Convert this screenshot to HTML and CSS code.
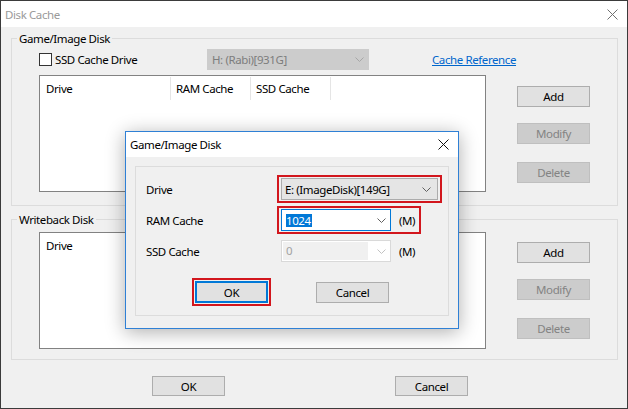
FILE: index.html
```html
<!DOCTYPE html>
<html>
<head>
<meta charset="utf-8">
<title>Disk Cache</title>
<link rel="stylesheet" href="styles.css">
</head>
<body>
<div class="win">
  <div class="titlebar">
    <span class="title">Disk Cache</span>
    <svg class="close" width="11" height="11" viewBox="0 0 11 11"><path d="M0.5 0.5L10.5 10.5M10.5 0.5L0.5 10.5"/></svg>
  </div>
  <div class="client">
    <div class="group g1">
      <span class="legend">Game/Image Disk</span>
      <div class="row1">
        <label class="chk"><span class="box"></span>SSD Cache Drive</label>
        <div class="combo wide"><span class="ctext">H: (Rabi)[931G]</span><svg class="chev" width="9" height="5" viewBox="0 0 9 5"><path d="M0.5 0.5L4.5 4.5L8.5 0.5"/></svg></div>
        <a class="link" href="#">Cache Reference</a>
      </div>
      <div class="row2">
        <div class="list">
          <div class="lhead">
            <span class="col c1">Drive</span><span class="col c2">RAM Cache</span><span class="col c3">SSD Cache</span>
          </div>
        </div>
        <div class="btns">
          <button class="btn">Add</button>
          <button class="btn dis m">Modify</button>
          <button class="btn dis d">Delete</button>
        </div>
      </div>
    </div>
    <div class="group g2">
      <span class="legend">Writeback Disk</span>
      <div class="row2">
        <div class="list">
          <div class="lhead">
            <span class="col c1 nosep">Drive</span>
          </div>
        </div>
        <div class="btns">
          <button class="btn">Add</button>
          <button class="btn dis m">Modify</button>
          <button class="btn dis d">Delete</button>
        </div>
      </div>
    </div>
    <div class="footer">
      <button class="btn fbtn">OK</button>
      <button class="btn fbtn cancel">Cancel</button>
    </div>
  </div>

  <div class="dlg">
    <div class="dtitle">
      <span class="title-active">Game/Image Disk</span>
      <svg class="dclose" width="11" height="11" viewBox="0 0 11 11"><path d="M0.5 0.5L10.5 10.5M10.5 0.5L0.5 10.5"/></svg>
    </div>
    <div class="dbody">
      <div class="igroup">
        <div class="frow">
          <span class="flabel">Drive</span>
          <div class="hl red">
            <div class="combo dd"><span class="ctext">E: (ImageDisk)[149G]</span><svg class="chev dchev" width="9" height="5" viewBox="0 0 9 5"><path d="M0.5 0.5L4.5 4.5L8.5 0.5"/></svg></div>
          </div>
        </div>
        <div class="frow">
          <span class="flabel">RAM Cache</span>
          <div class="hl red">
            <div class="combo ed"><span class="ctext"><span class="sel">1024</span></span><svg class="chev echev" width="9" height="5" viewBox="0 0 9 5"><path d="M0.5 0.5L4.5 4.5L8.5 0.5"/></svg></div>
            <span class="units">(M)</span>
          </div>
        </div>
        <div class="frow">
          <span class="flabel">SSD Cache</span>
          <div class="hl">
            <div class="combo sd"><span class="ctext sdtext">0</span><svg class="chev schev" width="9" height="5" viewBox="0 0 9 5"><path d="M0.5 0.5L4.5 4.5L8.5 0.5"/></svg></div>
            <span class="units">(M)</span>
          </div>
        </div>
        <div class="frow okrow">
          <div class="hl red okwrap">
            <button class="btn okbtn">OK</button>
          </div>
          <button class="btn dcancel">Cancel</button>
        </div>
      </div>
    </div>
  </div>
</div>
</body>
</html>
```

FILE: styles.css
```css
* { box-sizing: border-box; }
html, body { margin: 0; padding: 0; }
body {
  background: #1f1f1f;
  width: 628px;
  height: 409px;
  overflow: hidden;
  font-family: "Noto Sans", "Liberation Sans", sans-serif;
  font-size: 11.5px;
  letter-spacing: -0.4px;
  color: #000;
}

.win {
  position: relative;
  width: 628px;
  height: 409px;
  border: 1px solid #3b3b3b;
  background: #f0f0f0;
}

.titlebar {
  height: 26px;
  background: #fff;
  display: flex;
  align-items: center;
  padding-left: 4px;
}
.title { color: #9a9a9a; }
.close { margin-left: auto; margin-right: 9px; }
.close path { stroke: #707070; stroke-width: 1; fill: none; }

.client { padding: 11px 9px 0 10px; }

.group {
  position: relative;
  border: 1px solid #dcdcdc;
}
.legend {
  position: absolute;
  top: -8px;
  left: 5px;
  padding: 0 2px;
  background: #f0f0f0;
  line-height: 15px;
  white-space: nowrap;
}
.g1 { height: 168px; padding: 10px 0 0 27px; }
.g2 { height: 141px; padding: 12px 0 0 27px; margin-top: 13px; }

.row1 { display: flex; align-items: center; height: 21px; }
.chk { display: flex; align-items: center; width: 168px; white-space: nowrap; }
.box {
  width: 13px; height: 13px;
  border: 1px solid #333;
  background: #fff;
  margin-right: 3px;
}

.combo {
  display: flex;
  align-items: center;
  height: 21px;
  border: 1px solid #adadad;
  white-space: nowrap;
}
.ctext { flex: 1; overflow: hidden; }
.chev path { fill: none; stroke: #606060; stroke-width: 1; }
.wide {
  width: 162px;
  background: #cccccc;
  border-color: #cccccc;
  color: #7d7d7d;
  padding-left: 4px;
}
.wide .chev { margin-right: 4px; }
.wide .chev path { stroke: #a6a6a6; }

.link { margin-left: 63px; color: #0066cc; text-decoration: underline; }

.row2 { display: flex; margin-top: 5px; }
.g2 .row2 { margin-top: 0; }
.list {
  width: 447px;
  height: 117px;
  border: 1px solid #828282;
  background: #fff;
}
.lhead { display: flex; height: 24px; }
.col {
  border-right: 1px solid #e5e5e5;
  padding: 3px 0 0 5px;
  line-height: 17px;
  margin-top: 1px;
}
.c1 { width: 131px; padding-left: 6px; }
.c2 { width: 80px; }
.c3 { width: 80px; }
.nosep { border-right: none; }

.btns { display: flex; flex-direction: column; margin-left: 31px; padding-top: 11px; }
.g2 .btns { padding-top: 10px; }
.btn {
  width: 73px;
  height: 21px;
  background: #e1e1e1;
  border: 1px solid #adadad;
  font: inherit;
  letter-spacing: inherit;
  color: #000;
  padding: 0;
  display: flex;
  align-items: center;
  justify-content: center;
}
.m { margin-top: 16px; }
.d { margin-top: 18px; }
.dis { background: #cccccc; border-color: #bfbfbf; color: #838383; }

.footer { display: flex; margin-top: 16px; padding-left: 141px; }
.fbtn { height: 20px; }
.cancel { margin-left: 170px; }

/* Modal dialog overlaying the window */
.dlg {
  position: absolute;
  left: 124px;
  top: 130px;
  width: 334px;
  height: 198px;
  border: 1px solid #2f80d5;
  background: #f0f0f0;
  box-shadow: 0 3px 18px rgba(0, 0, 0, 0.32);
}
.dtitle {
  height: 25px;
  background: #fff;
  display: flex;
  align-items: center;
  padding-left: 4px;
}
.dclose { margin-left: auto; margin-right: 9px; }
.dclose path { stroke: #111; stroke-width: 1; fill: none; }

.dbody { padding: 9px 9px 0 9px; }
.igroup {
  border: 1px solid #dcdcdc;
  height: 150px;
  padding: 8px 0 0 10px;
}
.frow { display: flex; align-items: center; height: 28px; }
.frow + .frow { margin-top: 3px; }
.frow.okrow { margin-top: 13px; padding-left: 46px; }
.flabel { width: 131px; }
.hl {
  display: flex;
  align-items: center;
  border: 2px solid transparent;
  padding: 1px 2px;
}
.hl.red { border-color: #d2161d; }

.dd {
  width: 157px;
  height: 22px;
  background: #e5e5e5;
  border-color: #acacac;
  padding-left: 3px;
}
.dchev { margin-right: 6px; }

.ed {
  width: 110px;
  height: 22px;
  background: #fff;
  border-color: #0078d7;
  padding-left: 4px;
}
.sel {
  display: inline-block;
  background: #0078d7;
  color: #fff;
  line-height: 13px;
  padding: 0 1px 0 0;
}
.echev { margin-right: 4px; }

.sd {
  width: 110px;
  height: 22px;
  background: #fff;
  border-color: #d9d9d9;
  padding: 1px 0 1px 1px;
}
.sdtext {
  flex: none;
  width: 85px;
  height: 18px;
  line-height: 18px;
  background: #f0f0f0;
  color: #a3a3a3;
  padding-left: 3px;
}
.schev { margin-left: auto; margin-right: 4px; }
.schev path { stroke: #c2c2c2; }

.units { margin-left: 8px; margin-right: 2px; }

.okwrap { padding: 1px; }
.okbtn { height: 22px; border: 2px solid #0078d7; }
.dcancel { margin-left: 45px; }
```
